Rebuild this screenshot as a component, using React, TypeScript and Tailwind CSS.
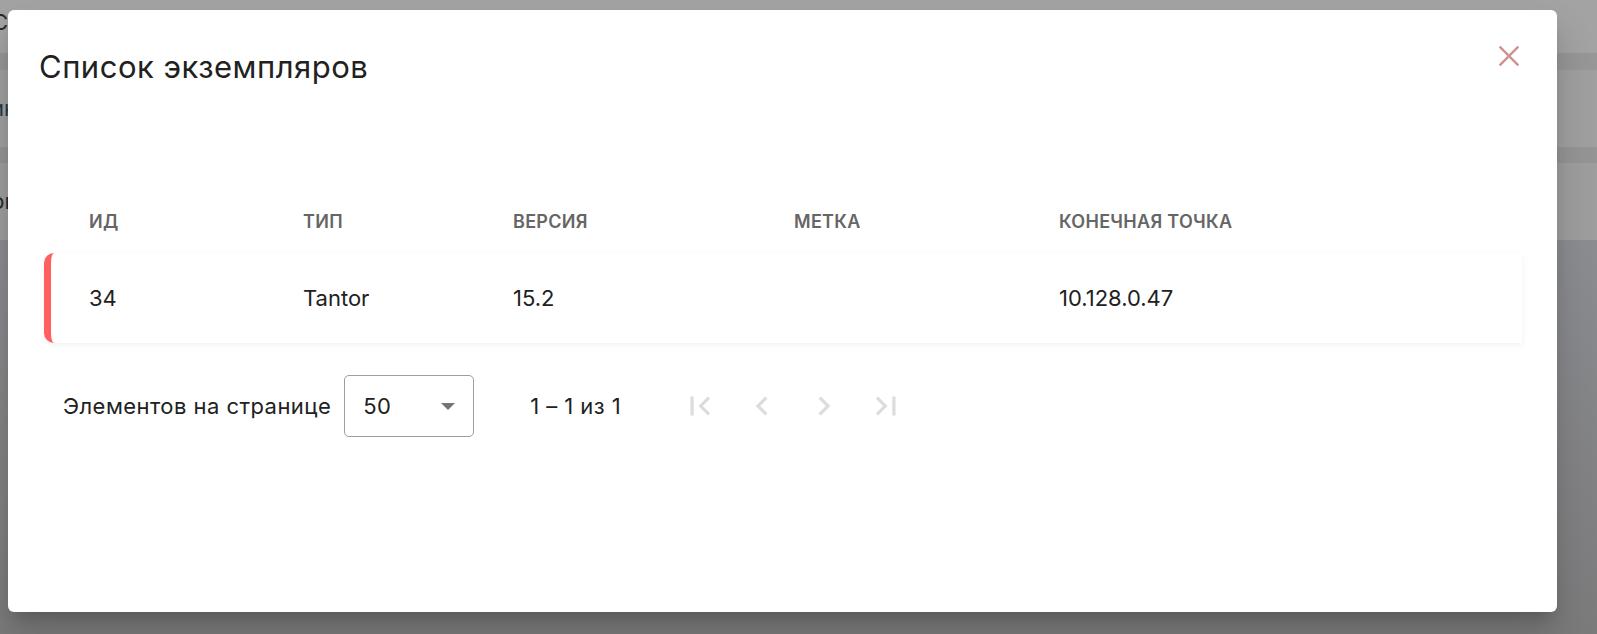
import React from "react";

const FirstIcon = () => (
  <svg width="38" height="38" viewBox="0 0 24 24" fill="currentColor">
    <path d="M18.41 16.59L13.82 12l4.59-4.59L17 6l-6 6 6 6zM6 6h2v12H6z" />
  </svg>
);
const PrevIcon = () => (
  <svg width="38" height="38" viewBox="0 0 24 24" fill="currentColor">
    <path d="M15.41 7.41L14 6l-6 6 6 6 1.41-1.41L10.83 12z" />
  </svg>
);
const NextIcon = () => (
  <svg width="38" height="38" viewBox="0 0 24 24" fill="currentColor">
    <path d="M10 6L8.59 7.41 13.17 12l-4.58 4.59L10 18l6-6z" />
  </svg>
);
const LastIcon = () => (
  <svg width="38" height="38" viewBox="0 0 24 24" fill="currentColor">
    <path d="M5.59 7.41L10.18 12l-4.59 4.59L7 18l6-6-6-6zM16 6h2v12h-2z" />
  </svg>
);

export default function App() {
  const font = { fontFamily: "Inter, 'Noto Sans', sans-serif" };
  return (
    <div className="relative w-[1597px] h-[634px] overflow-hidden bg-[#8a8b8f]" style={font}>
      {/* dimmed page behind */}
      <div className="flex flex-col">
        <div className="h-[53px] bg-[#a3a3a3] text-[22px] text-[#2a2a2a] pt-[6px] -ml-[8px]">Сп</div>
        <div className="h-[17px] bg-[#979797]" />
        <div className="h-[77px] bg-[#a0a0a0] text-[22px] text-[#1f3a4a] flex items-center -ml-[9px]">ин</div>
        <div className="h-[16px] bg-[#959595]" />
        <div className="h-[77px] bg-[#9e9e9e] text-[22px] text-[#2a2a2a] flex items-center -ml-[9px]">рп</div>
        <div className="h-[394px] bg-gradient-to-b from-[#8c8d91] to-[#7b7b7c]" />
      </div>

      {/* modal */}
      <div className="absolute left-[8px] top-[10px] w-[1549px] h-[602px] bg-white rounded-[6px] shadow-[0_11px_15px_-7px_rgba(0,0,0,0.2),0_24px_38px_3px_rgba(0,0,0,0.14)] flex flex-col">
        <div className="flex items-start justify-between pl-[31px] pr-[34px] pt-[37px]">
          <h2 className="text-[31px] leading-[40px] text-[#212121] font-normal tracking-[0.5px]">Список экземпляров</h2>
          <button className="mt-[-5px] text-[#cc9290]">
            <svg width="28" height="28" viewBox="0 0 24 24" fill="none" stroke="currentColor" strokeWidth="2">
              <path d="M4 4L20 20M20 4L4 20" />
            </svg>
          </button>
        </div>

        <div className="mt-[119px] pl-[36px] pr-[35px]">
          <div className="grid grid-cols-[214px_210px_281px_265px_1fr] pl-[45px] text-[18px] font-semibold text-[#666666] uppercase tracking-[0.3px] h-[30px] items-center">
            <div>Ид</div>
            <div>Тип</div>
            <div>Версия</div>
            <div>Метка</div>
            <div>Конечная точка</div>
          </div>
          <div className="mt-[17px] h-[90px] rounded-l-[10px] border-l-[7px] border-[#ff5f5f] bg-white shadow-[0_2px_6px_rgba(0,0,0,0.06)] grid grid-cols-[214px_210px_281px_265px_1fr] pl-[38px] items-center text-[22px] text-[#212121]">
            <div>34</div>
            <div>Tantor</div>
            <div>15.2</div>
            <div></div>
            <div>10.128.0.47</div>
          </div>
        </div>

        <div className="flex items-center pl-[55px] mt-[32px] text-[22px] text-[#212121] tracking-[0.45px]">
          <span>Элементов на странице</span>
          <div className="ml-[13px] w-[130px] h-[62px] border border-[#9e9e9e] rounded-[5px] flex items-center justify-between pl-[18px] pr-[18px]">
            <span>50</span>
            <span className="w-0 h-0 border-l-[7px] border-r-[7px] border-t-[7px] border-l-transparent border-r-transparent border-t-[#757575]" />
          </div>
          <span className="ml-[56px]">1 – 1 из 1</span>
          <div className="ml-[60px] flex items-center gap-[24px] text-[#dcdcdc]">
            <FirstIcon />
            <PrevIcon />
            <NextIcon />
            <LastIcon />
          </div>
        </div>
      </div>
    </div>
  );
}
